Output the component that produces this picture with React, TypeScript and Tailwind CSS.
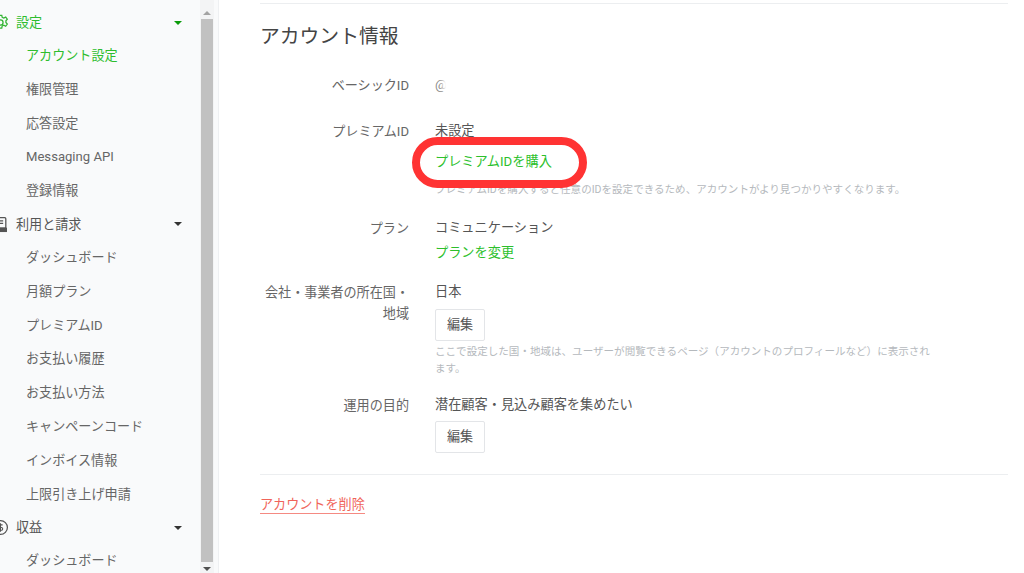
const FONT = "font-['Roboto','Noto_Sans_CJK_JP',sans-serif]";

type Item = { label: string; active?: boolean };
type Group = { title: string; icon: 'gear' | 'bill' | 'coin'; active?: boolean; items: Item[] };

const NAV: Group[] = [
  {
    title: '設定',
    icon: 'gear',
    active: true,
    items: [
      { label: 'アカウント設定', active: true },
      { label: '権限管理' },
      { label: '応答設定' },
      { label: 'Messaging API' },
      { label: '登録情報' },
    ],
  },
  {
    title: '利用と請求',
    icon: 'bill',
    items: [
      { label: 'ダッシュボード' },
      { label: '月額プラン' },
      { label: 'プレミアムID' },
      { label: 'お支払い履歴' },
      { label: 'お支払い方法' },
      { label: 'キャンペーンコード' },
      { label: 'インボイス情報' },
      { label: '上限引き上げ申請' },
    ],
  },
  {
    title: '収益',
    icon: 'coin',
    items: [{ label: 'ダッシュボード' }],
  },
];

function NavIcon({ name, color }: { name: Group['icon']; color: string }) {
  if (name === 'gear') {
    return (
      <svg width="17" height="17" viewBox="0 0 16 16" fill="none" stroke={color} strokeWidth="1.2" className="shrink-0">
        <circle cx="8" cy="8" r="2.4" />
        <path d="M6.8 1.2h2.4l.4 2 1.5.7 1.8-1 1.5 2-1.3 1.5v1.6l1.3 1.5-1.5 2-1.8-1-1.5.7-.4 2H6.8l-.4-2-1.5-.7-1.8 1-1.5-2 1.3-1.5V7.2L1.600 5.700l1.500-2 1.800 1 1.500-.7z" />
      </svg>
    );
  }
  if (name === 'bill') {
    return (
      <svg width="17" height="17" viewBox="0 0 16 16" fill="none" stroke={color} strokeWidth="1.2" className="shrink-0">
        <rect x="3" y="1.500" width="10" height="10" rx="1" />
        <path d="M5.500 4.500h5M5.500 7h5" />
        <rect x="2.500" y="11.500" width="11" height="3" fill={color} />
      </svg>
    );
  }
  return (
    <svg width="17" height="17" viewBox="0 0 16 16" fill="none" stroke={color} strokeWidth="1.2" className="shrink-0">
      <circle cx="8" cy="8" r="6.500" />
      <path d="M10 5.500H7.200a1.200 1.200 0 0 0 0 2.500h1.600a1.200 1.200 0 0 1 0 2.500H6M8 4v8" strokeWidth="1" />
    </svg>
  );
}

function Caret({ color }: { color: string }) {
  return <span className="h-0 w-0 border-x-[4px] border-t-[4px] border-x-transparent" style={{ borderTopColor: color }} />;
}

function Sidebar() {
  return (
    <aside className="flex h-[573px] w-[219px] shrink-0 overflow-hidden border-r border-[#eef0f2] bg-[#f9fafb]">
      <nav className="w-[200px] shrink-0 pt-[6px]">
        {NAV.map((group) => (
          <div key={group.title}>
            <div className="flex h-[33px] items-center pr-[18px]">
              <div className="-ml-[8px] flex flex-1 items-center gap-[7px]">
                <NavIcon name={group.icon} color={group.active ? '#35b535' : '#555'} />
                <span className={`text-[13.100px] ${group.active ? 'text-[#2ebd2e]' : 'text-[#555]'}`}>{group.title}</span>
              </div>
              <Caret color={group.active ? '#0b9b0b' : '#333'} />
            </div>
            {group.items.map((item) => (
              <div
                key={item.label}
                className={`flex h-[33.800px] items-center pl-[26px] text-[13.100px] ${item.active ? 'text-[#2ebd2e]' : 'text-[#666]'}`}
              >
                {item.label}
              </div>
            ))}
          </div>
        ))}
      </nav>
      <div className="flex w-[14px] shrink-0 flex-col items-center bg-[#f3f4f5] pt-[5px]">
        <div className="mb-[4px] mt-[6px] h-0 w-0 border-x-[4px] border-b-[4px] border-x-transparent border-b-[#a3a3a3]" />
        <div className="h-[543px] w-[12px] bg-[#c1c1c1]" />
        <div className="mt-[5px] h-0 w-0 border-x-[4px] border-t-[4px] border-x-transparent border-t-[#505050]" />
      </div>
    </aside>
  );
}

function Row({ label, children, className }: { label: React.ReactNode; children: React.ReactNode; className?: string }) {
  return (
    <div className={`flex ${className ?? ''}`}>
      <div className="w-[149px] shrink-0 text-right text-[13.100px] leading-[21px] text-[#666]">{label}</div>
      <div className="ml-[26px] w-[500px] text-[13.200px] leading-[20px] text-[#555]">{children}</div>
    </div>
  );
}

function EditButton({ className }: { className: string }) {
  return (
    <button className={`flex h-[32px] w-[50px] items-center justify-center rounded-[2px] border border-[#e3e5e8] bg-white text-[13.100px] text-[#555] ${className}`}>
      編集
    </button>
  );
}

export default function App() {
  return (
    <div className={`flex h-[573px] w-[1024px] overflow-hidden bg-white ${FONT}`}>
      <Sidebar />
      <main className="min-w-0 flex-1 pl-[41px] pr-[16px] pt-[3px]">
        <div className="border-t border-[#eceef0] pt-[20px]">
          <h2 className="text-[19.800px] leading-[26px] text-[#444]">アカウント情報</h2>

          <Row label="ベーシックID" className="mt-[25px]">
            <div className="relative">
              <span className="text-[#888]">@</span>
              <span className="absolute left-[7px] top-[-3px] h-[24px] w-[72px] rounded-full bg-white blur-[2px]" />
            </div>
          </Row>

          <Row label="プレミアムID" className="mt-[25px]">
            <div>未設定</div>
            <div className="relative mt-[11px] text-[#2cbf2c]">
              プレミアムIDを購入
              <span className="absolute left-[-23px] top-[-15px] h-[51px] w-[175px] rounded-full border-[8px] border-[#ff3333]" />
            </div>
            <p className="mt-[10px] whitespace-nowrap text-[10.550px] leading-[16px] text-[#b5b9bd]">
              プレミアムIDを購入すると任意のIDを設定できるため、アカウントがより見つかりやすくなります。
            </p>
          </Row>

          <Row label="プラン" className="mt-[20px]">
            <div>コミュニケーション</div>
            <div className="mt-[5px] text-[#2cbf2c]">プランを変更</div>
          </Row>

          <Row
            className="mt-[19px]"
            label={
              <>
                会社・事業者の所在国・
                <br />
                地域
              </>
            }
          >
            <div>日本</div>
            <EditButton className="mt-[7px]" />
            <p className="mt-[3px] w-[500px] text-[10.550px] leading-[16.500px] text-[#b5b9bd]">
              ここで設定した国・地域は、ユーザーが閲覧できるページ（アカウントのプロフィールなど）に表示されます。
            </p>
          </Row>

          <Row label="運用の目的" className="mt-[18px]">
            <div>潜在顧客・見込み顧客を集めたい</div>
            <EditButton className="mt-[6px]" />
          </Row>

          <div className="mt-[21px] border-t border-[#eceef0] pt-[17px]">
            <a className="border-b border-[#f58a82] pb-[1px] text-[13.100px] text-[#f0645a]">アカウントを削除</a>
          </div>
        </div>
      </main>
    </div>
  );
}
